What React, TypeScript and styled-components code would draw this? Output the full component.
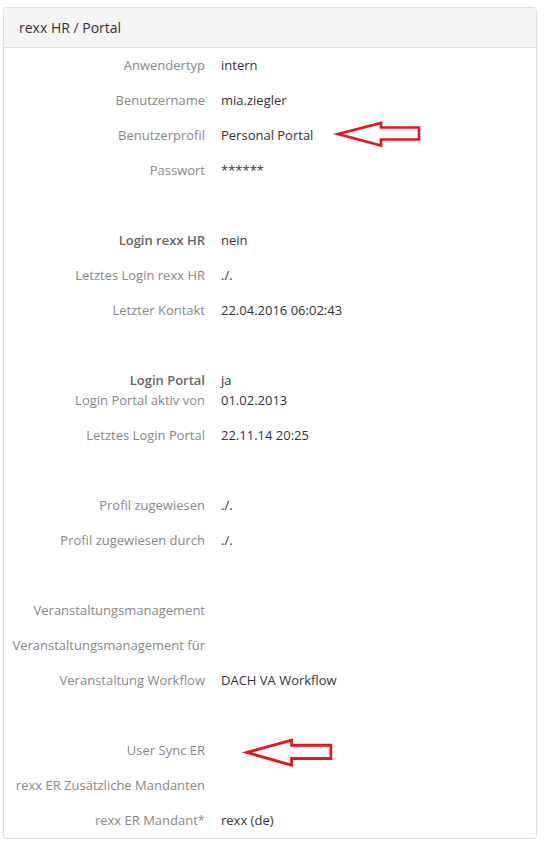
import React from "react";
import styled, { createGlobalStyle } from "styled-components";

const GlobalStyle = createGlobalStyle`
  html, body {
    margin: 0;
    padding: 0;
    background: #ffffff;
  }
  body {
    font-family: "Open Sans", "Noto Sans", Arial, sans-serif;
    font-size: 13px;
    color: #333333;
  }
`;

const Panel = styled.div`
  width: 534px;
  margin: 7px 0 0 3px;
  border: 1px solid #dddddd;
  border-radius: 4px;
  box-shadow: 0 1px 2px rgba(0, 0, 0, 0.06);
  background: #ffffff;
  box-sizing: border-box;
`;

const PanelHeading = styled.div`
  height: 39px;
  padding: 0 15px;
  display: flex;
  align-items: center;
  background: #f5f5f5;
  border-bottom: 1px solid #dddddd;
  border-radius: 3px 3px 0 0;
  font-size: 14px;
  color: #333333;
`;

const PanelBody = styled.div`
  padding: 7px 0 8px 0;
`;

const Row = styled.div<{ $tight?: boolean }>`
  display: grid;
  grid-template-columns: 201px 1fr;
  column-gap: 16px;
  line-height: 20px;
  margin-bottom: ${(p) => (p.$tight ? "0" : "15px")};
  &:last-child {
    margin-bottom: 0;
  }
`;

const Label = styled.div<{ $strong?: boolean }>`
  text-align: right;
  white-space: nowrap;
  color: ${(p) => (p.$strong ? "#666666" : "#888888")};
  font-weight: ${(p) => (p.$strong ? 600 : 400)};
`;

const Value = styled.div`
  position: relative;
  color: #333333;
`;

const Spacer = styled.div`
  height: 35px;
`;

const Arrow = styled.svg<{ $left: number; $top: number }>`
  position: absolute;
  left: ${(p) => p.$left}px;
  top: ${(p) => p.$top}px;
  overflow: visible;
`;

const RedArrow = ({
  left,
  top,
  width,
  height,
}: {
  left: number;
  top: number;
  width: number;
  height: number;
}) => (
  <Arrow
    $left={left}
    $top={top}
    width={width}
    height={height}
    viewBox="0 0 86 27"
    preserveAspectRatio="none"
  >
    <polygon
      points="2,13 45,2 45,6.5 83,6.5 83,18.5 45,18.5 45,24.5"
      fill="none"
      stroke="#e8141b"
      strokeWidth="2.6"
      strokeLinejoin="miter"
    />
  </Arrow>
);

type Item =
  | { kind: "gap" }
  | {
      kind: "row";
      label: string;
      value?: string;
      strong?: boolean;
      tight?: boolean;
      arrow?: { left: number; top: number; width: number; height: number };
    };

const items: Item[] = [
  { kind: "row", label: "Anwendertyp", value: "intern" },
  { kind: "row", label: "Benutzername", value: "mia.ziegler" },
  {
    kind: "row",
    label: "Benutzerprofil",
    value: "Personal Portal",
    arrow: { left: 115, top: -4, width: 86, height: 27 },
  },
  { kind: "row", label: "Passwort", value: "******" },
  { kind: "gap" },
  { kind: "row", label: "Login rexx HR", value: "nein", strong: true },
  { kind: "row", label: "Letztes Login rexx HR", value: "./." },
  { kind: "row", label: "Letzter Kontakt", value: "22.04.2016 06:02:43" },
  { kind: "gap" },
  { kind: "row", label: "Login Portal", value: "ja", strong: true, tight: true },
  { kind: "row", label: "Login Portal aktiv von", value: "01.02.2013" },
  { kind: "row", label: "Letztes Login Portal", value: "22.11.14 20:25" },
  { kind: "gap" },
  { kind: "row", label: "Profil zugewiesen", value: "./." },
  { kind: "row", label: "Profil zugewiesen durch", value: "./." },
  { kind: "gap" },
  { kind: "row", label: "Veranstaltungsmanagement" },
  { kind: "row", label: "Veranstaltungsmanagement für" },
  { kind: "row", label: "Veranstaltung Workflow", value: "DACH VA Workflow" },
  { kind: "gap" },
  {
    kind: "row",
    label: "User Sync ER",
    arrow: { left: 24, top: -2, width: 89, height: 30 },
  },
  { kind: "row", label: "rexx ER Zusätzliche Mandanten" },
  { kind: "row", label: "rexx ER Mandant*", value: "rexx (de)" },
];

export default function App() {
  return (
    <>
      <GlobalStyle />
      <Panel>
        <PanelHeading>rexx HR / Portal</PanelHeading>
        <PanelBody>
          {items.map((it, i) =>
            it.kind === "gap" ? (
              <Spacer key={i} />
            ) : (
              <Row key={i} $tight={it.tight}>
                <Label $strong={it.strong}>{it.label}</Label>
                <Value>
                  {it.value}
                  {it.arrow && <RedArrow {...it.arrow} />}
                </Value>
              </Row>
            )
          )}
        </PanelBody>
      </Panel>
    </>
  );
}
